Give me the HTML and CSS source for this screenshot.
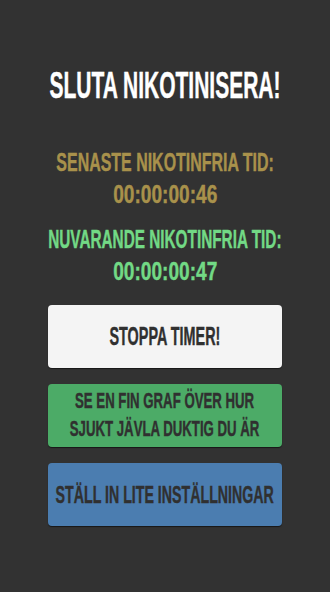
FILE: index.html
```html
<!DOCTYPE html>
<html lang="sv">
<head>
<meta charset="utf-8">
<title>Sluta nikotinisera!</title>
<link rel="stylesheet" href="styles.css">
</head>
<body>
<main class="screen">
  <h1 class="title"><span class="sq sq-title">SLUTA NIKOTINISERA!</span></h1>

  <section class="stat stat-last">
    <p class="label"><span class="sq sq-label-last">SENASTE NIKOTINFRIA TID:</span></p>
    <p class="time"><span class="sq sq-time">00:00:00:46</span></p>
  </section>

  <section class="stat stat-current">
    <p class="label"><span class="sq sq-label-current">NUVARANDE NIKOTINFRIA TID:</span></p>
    <p class="time"><span class="sq sq-time">00:00:00:47</span></p>
  </section>

  <div class="actions">
    <button class="btn btn-stop"><span class="sq sq-stop">STOPPA TIMER!</span></button>
    <button class="btn btn-graph"><span class="sq sq-graph">SE EN FIN GRAF ÖVER HUR<br>SJUKT JÄVLA DUKTIG DU ÄR</span></button>
    <button class="btn btn-settings"><span class="sq sq-settings">STÄLL IN LITE INSTÄLLNINGAR</span></button>
  </div>
</main>
</body>
</html>
```

FILE: styles.css
```css
html, body {
  margin: 0;
  padding: 0;
}

body {
  background: #323232;
  font-family: "Liberation Sans", Arial, sans-serif;
  font-weight: 700;
  width: 330px;
  height: 592px;
  overflow: hidden;
}

.screen {
  display: flex;
  flex-direction: column;
  align-items: center;
  padding-top: 66px;
}

/* condensed display lettering: glyphs squeezed horizontally, stretched vertically */
.sq {
  display: inline-block;
  white-space: nowrap;
  transform-origin: 50% 50%;
  -webkit-text-stroke: 0.35px currentColor;
}

.title {
  margin: 0;
  height: 40px;
  line-height: 40px;
  font-size: 30px;
  font-weight: 700;
  color: #ffffff;
  text-align: center;
}

.sq-title {
  transform: scale(0.70, 1.22);
}

.stat {
  display: flex;
  flex-direction: column;
  align-items: center;
}

.stat-last {
  margin-top: 39.5px;
  color: #a8914b;
}

.stat-current {
  margin-top: 13px;
  color: #72d985;
}

.label,
.time {
  margin: 0;
  height: 32px;
  line-height: 32px;
  font-size: 21px;
  text-align: center;
}

.sq-label-last {
  transform: scale(0.76, 1.22);
}

.sq-label-current {
  transform: scale(0.73, 1.22);
}

.sq-time {
  transform: scale(0.91, 1.22);
}

.actions {
  margin-top: 18px;
  display: flex;
  flex-direction: column;
  gap: 16px;
}

.btn {
  width: 234px;
  height: 63px;
  border: 0;
  border-radius: 4px;
  padding: 0;
  overflow: visible;
  display: flex;
  align-items: center;
  justify-content: center;
  font-family: inherit;
  font-weight: 700;
  color: #303030;
  text-align: center;
  box-shadow: 0 1px 1px rgba(0, 0, 0, 0.55);
}

.btn-stop {
  background: #f4f4f4;
  font-size: 21px;
  line-height: 30px;
}

.sq-stop {
  transform: scale(0.685, 1.24);
}

.btn-graph {
  background: #4cab67;
  font-size: 17.5px;
}

.sq-graph {
  line-height: 23px;
  transform: scale(0.755, 1.22);
}

.btn-settings {
  background: #4b7db0;
  font-size: 20px;
  line-height: 30px;
}

.sq-settings {
  transform: scale(0.71, 1.22);
}
```
